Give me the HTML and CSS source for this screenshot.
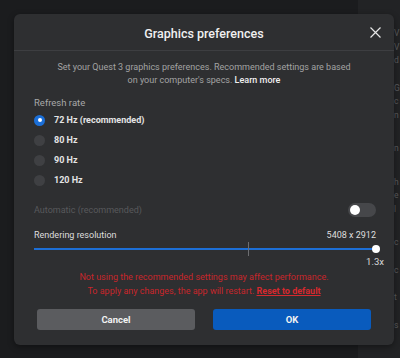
FILE: index.html
```html
<!DOCTYPE html>
<html lang="en">
<head>
    <meta charset="UTF-8">
    <meta name="viewport" content="width=device-width, initial-scale=1.0">
    <title>Graphics preferences</title>
    <link rel="stylesheet" href="styles.css">
</head>
<body>
    <div class="app">
        <div class="backdrop"></div>
        <aside class="side">
            <div class="group g1"><p>V</p><p>V</p><p>d</p></div>
            <div class="group g2"><p>G</p><p>c</p><p>n</p></div>
            <div class="group g3"><p>n</p></div>
            <div class="group g4"><p>h</p><p>e</p><p>l</p></div>
            <div class="group g5"><p>c</p></div>
            <div class="group g6"><p>c</p></div>
            <div class="group g6"><p>t</p></div>
            <div class="group g6"><p>s</p></div>
        </aside>
    </div>

    <div class="dialog">
        <header class="dialog-head">
            <h1>Graphics preferences</h1>
            <button class="close" aria-label="Close">
                <svg width="11" height="11" viewBox="0 0 11 11">
                    <path d="M0.5 0.5 L10.5 10.5 M10.5 0.5 L0.5 10.5" stroke="#e6e6e6" stroke-width="1.2" fill="none"/>
                </svg>
            </button>
        </header>
        <main class="dialog-body">
            <p class="intro">Set your Quest 3 graphics preferences. Recommended settings are based<br>on your computer's specs. <a href="#">Learn more</a></p>

            <div class="label">Refresh rate</div>
            <ul class="radios">
                <li class="selected"><span class="dot"></span>72 Hz (recommended)</li>
                <li><span class="dot"></span>80 Hz</li>
                <li><span class="dot"></span>90 Hz</li>
                <li><span class="dot"></span>120 Hz</li>
            </ul>

            <div class="row auto">
                <span>Automatic (recommended)</span>
                <span class="toggle"><span class="knob"></span></span>
            </div>

            <div class="row res">
                <span>Rendering resolution</span>
                <span>5408 x 2912</span>
            </div>
            <div class="slider">
                <span class="tick"></span>
                <span class="thumb"></span>
            </div>
            <div class="scale">1.3x</div>

            <p class="warning">Not using the recommended settings may affect performance.<br>To apply any changes, the app will restart. <a href="#">Reset to default</a></p>

            <div class="actions">
                <button class="btn cancel">Cancel</button>
                <button class="btn ok">OK</button>
            </div>
        </main>
    </div>
</body>
</html>
```

FILE: styles.css
```css
* {
    box-sizing: border-box;
}

body {
    margin: 0;
    width: 400px;
    height: 358px;
    overflow: hidden;
    background-color: #1b1c1e;
    font-family: 'Segoe UI', Roboto, 'Noto Sans', sans-serif;
    color: #e8e8e8;
}

.app {
    display: flex;
    height: 358px;
}

.backdrop {
    flex: 1;
}

.side {
    width: 42px;
    background-color: #222325;
    padding-top: 27px;
    padding-left: 36px;
    font-size: 8.5px;
    color: #5a5b5e;
}

.side p {
    margin: 0;
    height: 13.5px;
    line-height: 13.5px;
}

.g2 {
    margin-top: 14px;
}

.g3,
.g4,
.g5 {
    margin-top: 20px;
}

.g6 {
    margin-top: 14px;
}

/* dialog sits over the page */
.dialog {
    position: absolute;
    left: 14px;
    top: 14px;
    width: 380px;
    height: 331px;
    background-color: #2e2f31;
    border-radius: 6px;
    box-shadow: 0 2px 6px rgba(0, 0, 0, 0.4);
}

.dialog-head {
    height: 37px;
    border-bottom: 1px solid #3d3e41;
    display: flex;
    align-items: center;
    justify-content: center;
    position: relative;
}

.dialog-head h1 {
    margin: 0;
    font-size: 12.5px;
    font-weight: 500;
    color: #f0f0f0;
    padding-top: 2px;
}

.close {
    position: absolute;
    right: 13px;
    top: 13px;
    padding: 0;
    border: none;
    background: none;
    width: 11px;
    height: 11px;
    display: flex;
}

.dialog-body {
    padding: 10px 20px 0 20px;
}

.intro {
    margin: 0;
    text-align: center;
    font-size: 9px;
    line-height: 13px;
    color: #a3a3a3;
}

.intro a {
    color: #f0f0f0;
    font-weight: 500;
    text-decoration: none;
}

.label {
    margin-top: 9px;
    font-size: 9.5px;
    line-height: 14px;
    color: #a8a8a8;
}

.radios {
    list-style: none;
    margin: 0;
    padding: 0;
}

.radios li {
    display: flex;
    align-items: center;
    gap: 9px;
    height: 20px;
    font-size: 9px;
    font-weight: 700;
    color: #e4e4e4;
}

.dot {
    width: 11px;
    height: 11px;
    border-radius: 50%;
    background-color: #3f4043;
    display: flex;
    align-items: center;
    justify-content: center;
}

.selected .dot {
    background-color: #1b6fd8;
}

.selected .dot::after {
    content: "";
    width: 4px;
    height: 4px;
    border-radius: 50%;
    background-color: #fff;
}

.row {
    display: flex;
    justify-content: space-between;
    align-items: center;
    font-size: 9px;
    margin-right: -2px;
}

.auto {
    margin-top: 10px;
    height: 20px;
    color: #58595c;
}

.toggle {
    width: 28px;
    height: 14px;
    border-radius: 7px;
    background-color: #46474a;
    display: flex;
    align-items: center;
    padding-left: 2px;
}

.knob {
    width: 10px;
    height: 10px;
    border-radius: 50%;
    background-color: #fff;
}

.res {
    margin-top: 8px;
    height: 14px;
    color: #dedede;
}

.slider {
    position: relative;
    margin: 0 -2px 0 0;
    height: 14px;
}

.slider::before {
    content: "";
    position: absolute;
    left: 0;
    right: 0;
    top: 6px;
    height: 2px;
    background-color: #1d6fd6;
}

.tick {
    position: absolute;
    left: 214px;
    top: 0;
    width: 1px;
    height: 14px;
    background-color: #6d6e71;
}

.thumb {
    position: absolute;
    right: -4px;
    top: 3px;
    width: 8px;
    height: 8px;
    border-radius: 50%;
    background-color: #fff;
}

.scale {
    text-align: right;
    font-size: 9.5px;
    line-height: 12px;
    color: #d8d8d8;
    margin-right: -10px;
}

.warning {
    margin: 2px 0 0 0;
    text-align: center;
    font-size: 9px;
    line-height: 14px;
    color: #c8262b;
}

.warning a {
    color: #d6292e;
    font-weight: 700;
}

.actions {
    display: grid;
    grid-template-columns: 1fr 1fr;
    gap: 18px;
    margin: 11px 3px 0 3px;
}

.btn {
    height: 21px;
    border: none;
    border-radius: 3px;
    font-family: inherit;
    font-size: 9.5px;
    font-weight: 700;
    color: #f2f2f2;
}

.cancel {
    background-color: #5b5c5f;
}

.ok {
    background-color: #095bbd;
}
```
